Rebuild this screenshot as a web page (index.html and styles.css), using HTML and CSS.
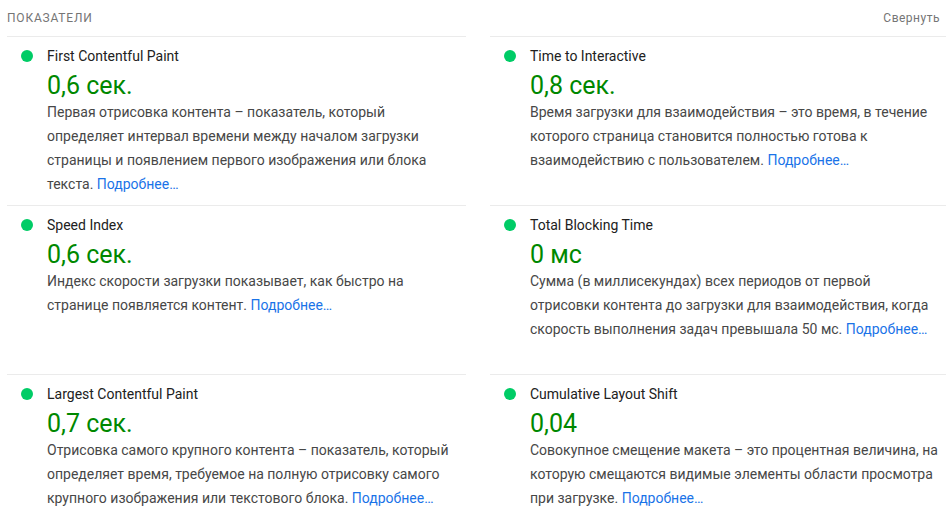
FILE: index.html
```html
<!DOCTYPE html>
<html lang="ru">
<head>
<meta charset="utf-8">
<title>Показатели</title>
<link rel="stylesheet" href="styles.css">
</head>
<body>
<div class="metrics">
  <div class="header">
    <span class="header-title">Показатели</span>
    <span class="header-toggle">Свернуть</span>
  </div>
  <div class="grid">
    <div class="metric">
      <span class="dot"></span>
      <div class="body">
        <div class="title">First Contentful Paint</div>
        <div class="value">0,6 сек.</div>
        <p class="desc">Первая отрисовка контента – показатель, который определяет интервал времени между началом загрузки страницы и появлением первого изображения или блока текста. <a class="more" href="#">Подробнее…</a></p>
      </div>
    </div>
    <div class="metric">
      <span class="dot"></span>
      <div class="body">
        <div class="title">Time to Interactive</div>
        <div class="value">0,8 сек.</div>
        <p class="desc">Время загрузки для взаимодействия – это время, в течение которого страница становится полностью готова к взаимодействию с пользователем. <a class="more" href="#">Подробнее…</a></p>
      </div>
    </div>
    <div class="metric">
      <span class="dot"></span>
      <div class="body">
        <div class="title">Speed Index</div>
        <div class="value">0,6 сек.</div>
        <p class="desc">Индекс скорости загрузки показывает, как быстро на странице появляется контент. <a class="more" href="#">Подробнее…</a></p>
      </div>
    </div>
    <div class="metric">
      <span class="dot"></span>
      <div class="body">
        <div class="title">Total Blocking Time</div>
        <div class="value">0 мс</div>
        <p class="desc">Сумма (в миллисекундах) всех периодов от первой отрисовки контента до загрузки для взаимодействия, когда скорость выполнения задач превышала 50 мс. <a class="more" href="#">Подробнее…</a></p>
      </div>
    </div>
    <div class="metric">
      <span class="dot"></span>
      <div class="body">
        <div class="title">Largest Contentful Paint</div>
        <div class="value">0,7 сек.</div>
        <p class="desc">Отрисовка самого крупного контента – показатель, который определяет время, требуемое на полную отрисовку самого крупного изображения или текстового блока. <a class="more" href="#">Подробнее…</a></p>
      </div>
    </div>
    <div class="metric">
      <span class="dot"></span>
      <div class="body">
        <div class="title">Cumulative Layout Shift</div>
        <div class="value">0,04</div>
        <p class="desc">Совокупное смещение макета – это процентная величина, на которую смещаются видимые элементы области просмотра при загрузке. <a class="more" href="#">Подробнее…</a></p>
      </div>
    </div>
  </div>
</div>
</body>
</html>
```
FILE: styles.css
```css
* { box-sizing: border-box; }
body {
  margin: 0;
  background: #fff;
  font-family: Roboto, "Liberation Sans", Arial, sans-serif;
}
.metrics {
  margin-left: 7px;
  width: 939px;
}
.header {
  height: 36px;
  display: flex;
  align-items: center;
  justify-content: space-between;
  padding-right: 6px;
  font-size: 12px;
  line-height: 20px;
  color: #757575;
}
.header-title {
  text-transform: uppercase;
  letter-spacing: 0.8px;
}
.header-toggle { letter-spacing: 0.5px; }
.grid {
  display: grid;
  grid-template-columns: 459px 456px;
  column-gap: 24px;
  grid-auto-rows: 1fr;
}
.metric {
  display: flex;
  align-items: flex-start;
  border-top: 1px solid #ebebeb;
  padding: 9px 6px 9px 14px;
}
.dot {
  flex: none;
  width: 12px;
  height: 12px;
  border-radius: 50%;
  background: #0c6;
  margin-top: 4px;
  margin-right: 14px;
}
.body { flex: 1; min-width: 0; }
.title {
  font-size: 14px;
  line-height: 20px;
  color: #212121;
}
.value {
  margin-top: 5px;
  font-size: 25px;
  line-height: 29px;
  color: #080;
}
.desc {
  margin: 0;
  font-size: 14px;
  line-height: 24px;
  color: #474747;
}
.more {
  color: #1a73e8;
  text-decoration: none;
}
```
